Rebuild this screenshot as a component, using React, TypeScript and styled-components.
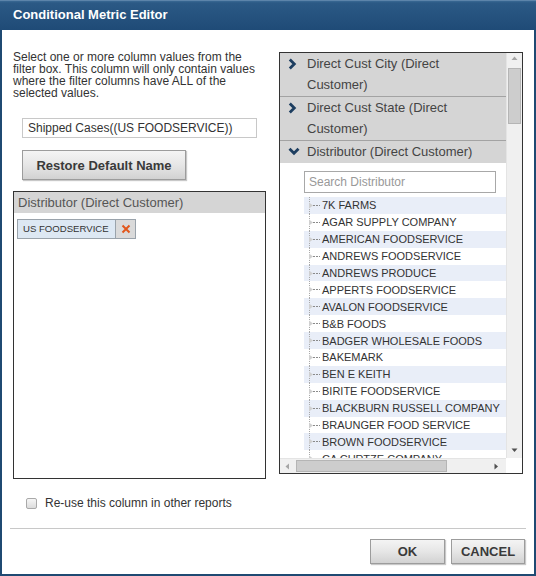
import React from 'react';
import styled, { createGlobalStyle } from 'styled-components';

const Global = createGlobalStyle`
  html, body { margin: 0; padding: 0; background: #fff; }
  body { font-family: "Liberation Sans", Arial, sans-serif; color: #333; }
  * { box-sizing: border-box; }
`;

const Dialog = styled.div`
  width: 536px;
  height: 576px;
  display: flex;
  flex-direction: column;
`;

const TitleBar = styled.div`
  height: 30px;
  flex: none;
  display: flex;
  align-items: center;
  padding: 0 0 3px 13px;
  background: linear-gradient(#3a6994 0px, #2b5985 2px, #1f4b77 100%);
  border-top: 1px solid #5c84aa;
  color: #fff;
  font-weight: bold;
  font-size: 13px;
`;

const Frame = styled.div`
  flex: 1;
  border: 2px solid #1f4a72;
  border-top: none;
  background: #fff;
  display: flex;
  flex-direction: column;
`;

const Body = styled.div`
  display: flex;
  gap: 13px;
  padding: 0 11px 0 11px;
  height: 449px;
  flex: none;
`;

const LeftCol = styled.div`
  width: 253px;
  display: flex;
  flex-direction: column;
`;

const Description = styled.p`
  margin: 21px 0 0 0;
  font-size: 12px;
  line-height: 12px;
  color: #333;
`;

const NameInput = styled.div`
  margin: 19px 0 0 9px;
  width: 235px;
  height: 20px;
  border: 1px solid #c8c8c8;
  font-size: 12px;
  line-height: 18px;
  padding-left: 5px;
  color: #333;
`;

const GrayButton = styled.button<{ $w: number; $h: number; $size?: number }>`
  width: ${(p) => p.$w}px;
  height: ${(p) => p.$h}px;
  padding: 0;
  border: 1px solid #9c9c9c;
  background: linear-gradient(#f4f4f4 0%, #e6e6e6 50%, #d2d2d2 100%);
  box-shadow: 1px 1px 1px #c8c8c8;
  font-family: "Liberation Sans", Arial, sans-serif;
  font-weight: bold;
  font-size: ${(p) => p.$size ?? 13}px;
  color: #3a3a3a;
`;

const RestoreWrap = styled.div`
  margin: 12px 0 0 9px;
`;

const FilterBox = styled.div`
  margin-top: 11px;
  height: 288px;
  border: 1px solid #333;
  display: flex;
  flex-direction: column;
`;

const FilterHeader = styled.div`
  height: 21px;
  background: #d5d5d5;
  font-size: 13px;
  line-height: 21px;
  padding-left: 4px;
  color: #555;
`;

const ChipRow = styled.div`
  display: flex;
  margin: 6px 0 0 3px;
`;

const ChipLabel = styled.div`
  height: 20px;
  width: 99px;
  padding-left: 5px;
  background: #dde8f3;
  border: 1px solid #9aa3ab;
  font-size: 9.6px;
  line-height: 18px;
  white-space: nowrap;
  overflow: hidden;
  color: #333;
`;

const ChipClose = styled.div`
  width: 20px;
  height: 20px;
  background: #dadada;
  border: 1px solid #9aa3ab;
  border-left: none;
  display: flex;
  align-items: center;
  justify-content: center;
`;

const RightBox = styled.div`
  margin-top: 22px;
  width: 244px;
  height: 422px;
  border: 1px solid #333;
  display: grid;
  grid-template-columns: 226px 16px;
  grid-template-rows: 405px 15px;
`;

const Main = styled.div`
  overflow: hidden;
  display: flex;
  flex-direction: column;
`;

const Panel = styled.div<{ $lines: number; $sep: boolean }>`
  height: ${(p) => p.$lines * 21 + (p.$sep ? 2 : 1)}px;
  flex: none;
  background: #d5d5d5;
  border-bottom: ${(p) => (p.$sep ? '1px solid #a3a3a3' : 'none')};
  display: flex;
  align-items: flex-start;
  font-size: 13px;
  line-height: 21px;
  color: #444;
`;

const PanelIcon = styled.div`
  width: 27px;
  height: 21px;
  flex: none;
  display: flex;
  align-items: center;
  padding-left: 8px;
`;

const SearchBox = styled.div`
  margin: 8px 0 0 24px;
  width: 192px;
  height: 22px;
  flex: none;
  border: 1px solid #a8a8a8;
  font-size: 12px;
  line-height: 20px;
  padding-left: 4px;
  color: #999;
`;

const Tree = styled.div`
  margin: 4px 0 0 24px;
  display: flex;
  flex-direction: column;
`;

const TreeRow = styled.div<{ $alt: boolean }>`
  height: 16.9px;
  flex: none;
  display: flex;
  align-items: center;
  background: ${(p) => (p.$alt ? '#e9eef8' : '#fff')};
  font-size: 11px;
  color: #333;
  white-space: nowrap;
`;

const VScroll = styled.div`
  background: #f0f0f0;
  border-left: 1px solid #e4e4e4;
  display: flex;
  flex-direction: column;
  align-items: center;
`;

const VThumb = styled.div`
  margin-top: 3px;
  width: 13px;
  height: 56px;
  background: #cdcdcd;
  border: 1px solid #b5b5b5;
`;

const ArrowBox = styled.div<{ $h: number; $w: number }>`
  width: ${(p) => p.$w}px;
  height: ${(p) => p.$h}px;
  flex: none;
  display: flex;
  align-items: center;
  justify-content: center;
`;

const Spacer = styled.div`
  flex: 1;
`;

const HScroll = styled.div`
  background: #f0f0f0;
  border-top: 1px solid #e4e4e4;
  display: flex;
  align-items: center;
`;

const HThumb = styled.div`
  width: 151px;
  height: 12px;
  background: #cdcdcd;
  border: 1px solid #b5b5b5;
`;

const Corner = styled.div`
  background: #fff;
`;

const CheckRow = styled.label`
  margin: 18px 0 0 24px;
  display: flex;
  align-items: center;
  gap: 8px;
  font-size: 12px;
  color: #333;
  height: 12px;
`;

const CheckBox = styled.span`
  width: 11px;
  height: 11px;
  border: 1px solid #a9a9a9;
  border-radius: 2px;
  background: linear-gradient(#f6f6f6, #dcdcdc);
`;

const Separator = styled.div`
  margin: 19px 8px 0 8px;
  height: 1px;
  background: #c8c8c8;
`;

const Footer = styled.div`
  margin: 10px 9px 0 0;
  display: flex;
  justify-content: flex-end;
  gap: 6px;
`;

const Chevron = ({ down }: { down?: boolean }) =>
  down ? (
    <svg width="12" height="9" viewBox="0 0 12 9">
      <path d="M1.5 1.8 L6 6.3 L10.5 1.8" fill="none" stroke="#1d3e60" strokeWidth="2.8" />
    </svg>
  ) : (
    <svg width="9" height="12" viewBox="0 0 9 12">
      <path d="M1.8 1.5 L6.3 6 L1.8 10.5" fill="none" stroke="#1d3e60" strokeWidth="2.8" />
    </svg>
  );

const Connector = () => (
  <svg width="18" height="17" viewBox="0 0 18 17" style={{ flex: 'none' }}>
    <line x1="5.5" y1="0" x2="5.5" y2="17" stroke="#a8a8a8" strokeDasharray="1 1" />
    <polygon points="5,5.5 9,8.5 5,11.5" fill="#d0d0d0" />
    <line x1="9" y1="8.5" x2="16" y2="8.5" stroke="#8a8a8a" strokeDasharray="2 1" />
  </svg>
);

const Tri = ({ dir }: { dir: 'up' | 'down' | 'left' | 'right' }) => {
  const pts = {
    up: '0.5,4 3.5,0.5 6.5,4',
    down: '0.5,0.5 3.5,4 6.5,0.5',
    left: '4,0.5 0.5,3.5 4,6.5',
    right: '0.5,0.5 4,3.5 0.5,6.5',
  }[dir];
  const light = dir === 'up' || dir === 'left';
  return (
    <svg width="7" height="7" viewBox="0 0 7 7">
      <polygon points={pts} fill={light ? '#a5a5a5' : '#505050'} />
    </svg>
  );
};

const distributors = [
  '7K FARMS',
  'AGAR SUPPLY COMPANY',
  'AMERICAN FOODSERVICE',
  'ANDREWS FOODSERVICE',
  'ANDREWS PRODUCE',
  'APPERTS FOODSERVICE',
  'AVALON FOODSERVICE',
  'B&B FOODS',
  'BADGER WHOLESALE FOODS',
  'BAKEMARK',
  'BEN E KEITH',
  'BIRITE FOODSERVICE',
  'BLACKBURN RUSSELL COMPANY',
  'BRAUNGER FOOD SERVICE',
  'BROWN FOODSERVICE',
  'CA CURTZE COMPANY',
];

export default function App() {
  return (
    <>
      <Global />
      <Dialog>
        <TitleBar>Conditional Metric Editor</TitleBar>
        <Frame>
          <Body>
            <LeftCol>
              <Description>
                Select one or more column values from the filter box. This column will only contain values
                where the filter columns have ALL of the selected values.
              </Description>
              <NameInput>Shipped Cases((US FOODSERVICE))</NameInput>
              <RestoreWrap>
                <GrayButton $w={164} $h={30}>Restore Default Name</GrayButton>
              </RestoreWrap>
              <FilterBox>
                <FilterHeader>Distributor (Direct Customer)</FilterHeader>
                <ChipRow>
                  <ChipLabel>US FOODSERVICE</ChipLabel>
                  <ChipClose>
                    <svg width="10" height="10" viewBox="0 0 10 10">
                      <path d="M1.5 1.5 L8.5 8.5 M8.5 1.5 L1.5 8.5" stroke="#e2571c" strokeWidth="2" />
                    </svg>
                  </ChipClose>
                </ChipRow>
              </FilterBox>
            </LeftCol>
            <RightBox>
              <Main>
                <Panel $lines={2} $sep>
                  <PanelIcon><Chevron /></PanelIcon>
                  <span>Direct Cust City (Direct<br />Customer)</span>
                </Panel>
                <Panel $lines={2} $sep>
                  <PanelIcon><Chevron /></PanelIcon>
                  <span>Direct Cust State (Direct<br />Customer)</span>
                </Panel>
                <Panel $lines={1} $sep={false}>
                  <PanelIcon><Chevron down /></PanelIcon>
                  <span>Distributor (Direct Customer)</span>
                </Panel>
                <SearchBox>Search Distributor</SearchBox>
                <Tree>
                  {distributors.map((d, i) => (
                    <TreeRow key={d} $alt={i % 2 === 0}>
                      <Connector />
                      {d}
                    </TreeRow>
                  ))}
                </Tree>
              </Main>
              <VScroll>
                <ArrowBox $w={15} $h={12}><Tri dir="up" /></ArrowBox>
                <VThumb />
                <Spacer />
                <ArrowBox $w={15} $h={14}><Tri dir="down" /></ArrowBox>
              </VScroll>
              <HScroll>
                <ArrowBox $w={16} $h={13}><Tri dir="left" /></ArrowBox>
                <HThumb />
                <Spacer />
                <ArrowBox $w={18} $h={13}><Tri dir="right" /></ArrowBox>
              </HScroll>
              <Corner />
            </RightBox>
          </Body>
          <CheckRow>
            <CheckBox />
            Re-use this column in other reports
          </CheckRow>
          <Separator />
          <Footer>
            <GrayButton $w={75} $h={25} $size={13}>OK</GrayButton>
            <GrayButton $w={74} $h={25} $size={13}>CANCEL</GrayButton>
          </Footer>
        </Frame>
      </Dialog>
    </>
  );
}
